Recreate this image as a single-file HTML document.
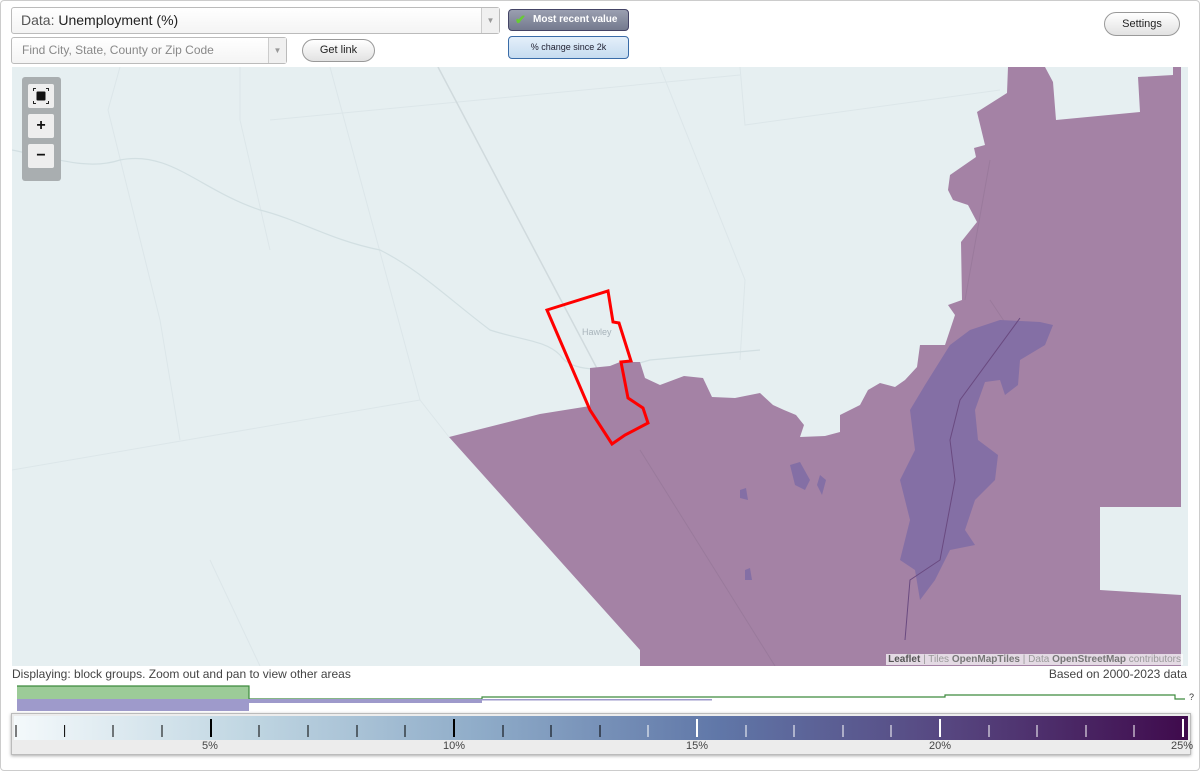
<!DOCTYPE html>
<html><head><meta charset="utf-8"><style>
*{box-sizing:border-box;margin:0;padding:0}
body{width:1200px;height:771px;background:#fff;font-family:"Liberation Sans",Arial,sans-serif;position:relative;overflow:hidden}
.frame{position:absolute;left:0;top:0;width:1200px;height:771px;border:1px solid #ccc;border-radius:4px}
.sel{position:absolute;border:1px solid #bbb;border-radius:3px;background:linear-gradient(#fff,#f4f4f4);color:#555}
.arr{position:absolute;right:0;top:0;bottom:0;width:18px;border-left:1px solid #ccc;background:#f0f0f0;color:#999;font-size:8px;text-align:center}
.btn{position:absolute;border:1px solid #999;border-radius:12px;background:linear-gradient(#fff,#e2e2e2);font-size:11px;color:#222;text-align:center}
.map{position:absolute;left:12px;top:67px;width:1176px;height:599px;background:#e6eff1;overflow:hidden}
.zc{position:absolute;left:22px;top:77px;width:39px;height:104px;background:#a9aeb0;border-radius:3px}
.zb{position:absolute;left:6px;width:26px;height:24px;background:#eeeeee;border-radius:2px;font-weight:bold;font-size:16px;text-align:center;line-height:23px;color:#111}
</style></head><body>
<div class="frame"></div>
<div class="sel" style="left:11px;top:7px;width:489px;height:27px;font-size:14px;line-height:25px;padding-left:9px">Data: <span style="color:#222">Unemployment (%)</span><div class="arr" style="line-height:25px">▼</div></div>
<div class="sel" style="left:11px;top:37px;width:276px;height:27px;font-size:12px;line-height:25px;padding-left:10px;color:#888">Find City, State, County or Zip Code<div class="arr" style="line-height:25px">▼</div></div>
<div class="btn" style="left:302px;top:39px;width:73px;height:23px;line-height:21px">Get link</div>
<div style="position:absolute;left:508px;top:9px;width:121px;height:22px;border:1px solid #446;border-radius:4px;background:linear-gradient(#9a9fb0,#747a8e);color:#fff;font-size:10px;font-weight:bold;line-height:20px;padding-left:24px">Most recent value<span style="position:absolute;left:6px;top:0;color:#6c3;font-size:13px">✔</span></div>
<div style="position:absolute;left:508px;top:36px;width:121px;height:23px;border:1px solid #3a6ca8;border-radius:4px;background:linear-gradient(#e4effa,#c6dcf0);color:#223;font-size:9px;line-height:21px;text-align:center">% change since 2k</div>
<div class="btn" style="left:1104px;top:12px;width:76px;height:24px;line-height:22px">Settings</div>
<div class="map">
<svg width="1176" height="599" viewBox="12 67 1176 599" style="position:absolute;left:0;top:0">
<g fill="none" stroke="#dce6e9" stroke-width="1">
<path d="M120 67 L108 110 L160 320 L180 440"/><path d="M240 67 L240 120 L270 250"/><path d="M270 120 L740 75"/><path d="M330 67 L420 400"/><path d="M660 67 L745 280 L740 360"/><path d="M12 470 L420 400 L449 437"/><path d="M210 560 L260 666"/><path d="M740 67 L745 125 L1000 90"/>
<path d="M12 150 C60 160 90 170 120 160 C170 150 200 190 260 210 C300 220 330 240 380 250 C420 270 450 300 490 330 C520 340 545 340 560 355 C570 370 600 375 650 360 L760 350" stroke="#d2dfe2" stroke-width="1.2"/>
<path d="M438 67 L640 450 L775 666" stroke="#d0dadd" stroke-width="1.5"/>
</g>
<path fill="#a482a5" d="M449 437 L540 414 L590 406 L590 368 L610 366 L620 362 L640 362 L645 378 L660 385 L684 376 L703 378 L712 397 L735 398 L760 393 L773 405 L784 410 L796 415 L804 425 L800 437 L825 436 L840 432 L840 415 L860 405 L868 390 L880 383 L895 387 L905 380 L917 367 L920 345 L945 345 L955 315 L948 305 L962 300 L961 242 L977 222 L968 205 L953 200 L948 190 L950 175 L976 157 L974 148 L985 145 L977 112 L1007 93 L1008 67 L1045 67 L1053 82 L1056 120 L1140 112 L1138 77 L1173 75 L1173 67 L1181 67 L1181 507 L1100 507 L1100 590 L1181 595 L1181 666 L640 666 L640 650 Z"/>
<path fill="none" stroke="#9a7a9c" stroke-width="1" d="M640 450 L775 666 M990 160 L965 300 M990 300 L1010 330"/>
<path fill="#846fa5" d="M1040 322 L1053 325 L1045 345 L1020 360 L1018 385 L1005 395 L1000 380 L985 382 L975 410 L978 440 L998 455 L995 480 L975 500 L965 530 L975 545 L950 550 L935 580 L920 600 L915 570 L900 560 L910 520 L900 480 L915 450 L910 410 L925 385 L950 345 L970 330 L1000 320 Z"/>
<g fill="#846fa5"><path d="M790 465 L800 462 L810 480 L805 490 L795 485Z"/><path d="M740 490 L746 488 L748 500 L740 498Z"/><path d="M745 570 L750 568 L752 580 L745 580Z"/><path d="M820 475 L826 480 L822 495 L817 485Z"/></g>
<path fill="none" stroke="#6a4a80" stroke-width="1" d="M1020 318 L960 400 L950 440 L955 480 L940 560 L910 580 L905 640"/>
<path fill="none" stroke="#f00" stroke-width="3" d="M547 310 L608 291 L613 322 L619 323 L631 361 L621 362 L628 398 L643 408 L648 423 L625 435 L612 444 L590 410 Z"/>
<text x="582" y="335" font-size="9" fill="#a8b4bb" font-family="Liberation Sans">Hawley</text>
</svg>
<div style="position:absolute;right:5px;bottom:1px;background:rgba(255,255,255,.7);font-size:10px;color:#999;padding:0 2px"><b style="color:#555">Leaflet</b> | Tiles <b style="color:#777">OpenMapTiles</b> | Data <b style="color:#777">OpenStreetMap</b> contributors</div>
</div>
<div class="zc"><div class="zb" style="top:7px"><svg width="26" height="24" viewBox="0 0 26 24"><rect x="8.5" y="7.5" width="9" height="9" rx="1" fill="#111"/><path d="M5 4h3v1H6v2H5z M21 4h-3v1h2v2h1z M5 20h3v-1H6v-2H5z M21 20h-3v-1h2v-2h1z" fill="#222"/></svg></div><div class="zb" style="top:37px">+</div><div class="zb" style="top:67px">−</div></div>
<div style="position:absolute;left:12px;top:667px;font-size:12px;color:#444">Displaying: block groups. Zoom out and pan to view other areas</div>
<div style="position:absolute;right:13px;top:667px;font-size:12px;color:#444">Based on 2000-2023 data</div>
<svg style="position:absolute;left:0;top:684px" width="1200" height="30">
<rect x="17" y="2" width="232" height="13" fill="#9ccb98"/><path d="M17 2 H249 V15 H482 V13 H945 V11 H1175 V15 H1185" fill="none" stroke="#3d8a3d" stroke-width="1.2"/>
<rect x="17" y="15" width="232" height="12" fill="#9e9acb"/><rect x="249" y="15" width="233" height="4" fill="#9e9acb"/><rect x="482" y="15" width="230" height="1.5" fill="#9e9acb"/>
<text x="1189" y="16" font-size="9" fill="#333">?</text>
</svg>
<div style="position:absolute;left:11px;top:713px;width:1180px;height:42px;border:1px solid #bbb;background:#ececec;box-shadow:0 1px 3px #aaa">
<div style="position:absolute;left:2px;top:2px;width:1174px;height:24px;background:linear-gradient(90deg,#f4f9fb,#c0d6e2 20%,#8eabc8 40%,#6077a8 60%,#56457f 80%,#3f0a4c)"></div>
<div style="position:absolute;top:26px;left:0;width:1180px;font-size:11px;color:#444">
<span style="position:absolute;left:190px">5%</span><span style="position:absolute;left:431px">10%</span><span style="position:absolute;left:674px">15%</span><span style="position:absolute;left:917px">20%</span><span style="position:absolute;left:1159px">25%</span></div>
</div>
<svg style="position:absolute;left:11px;top:713px" width="1180" height="30">
<g stroke-width="1">
<line x1="5" y1="12" x2="5" y2="24" stroke="#000"/><line x1="53.6" y1="12" x2="53.6" y2="24" stroke="#000"/><line x1="102" y1="12" x2="102" y2="24" stroke="#000"/><line x1="151" y1="12" x2="151" y2="24" stroke="#000"/>
<line x1="200" y1="6" x2="200" y2="24" stroke="#000" stroke-width="2"/>
<line x1="248" y1="12" x2="248" y2="24" stroke="#000"/><line x1="297" y1="12" x2="297" y2="24" stroke="#000"/><line x1="346" y1="12" x2="346" y2="24" stroke="#000"/><line x1="394" y1="12" x2="394" y2="24" stroke="#000"/>
<line x1="443" y1="6" x2="443" y2="24" stroke="#000" stroke-width="2"/>
<line x1="492" y1="12" x2="492" y2="24" stroke="#000"/><line x1="540" y1="12" x2="540" y2="24" stroke="#000"/><line x1="589" y1="12" x2="589" y2="24" stroke="#000"/><line x1="637" y1="12" x2="637" y2="24" stroke="#fff"/>
<line x1="686" y1="6" x2="686" y2="24" stroke="#fff" stroke-width="2"/>
<line x1="735" y1="12" x2="735" y2="24" stroke="#fff"/><line x1="783" y1="12" x2="783" y2="24" stroke="#fff"/><line x1="832" y1="12" x2="832" y2="24" stroke="#fff"/><line x1="880" y1="12" x2="880" y2="24" stroke="#fff"/>
<line x1="929" y1="6" x2="929" y2="24" stroke="#fff" stroke-width="2"/>
<line x1="978" y1="12" x2="978" y2="24" stroke="#fff"/><line x1="1026" y1="12" x2="1026" y2="24" stroke="#fff"/><line x1="1075" y1="12" x2="1075" y2="24" stroke="#fff"/><line x1="1123" y1="12" x2="1123" y2="24" stroke="#fff"/>
<line x1="1172" y1="6" x2="1172" y2="24" stroke="#fff" stroke-width="2"/>
</g></svg>
</body></html>
